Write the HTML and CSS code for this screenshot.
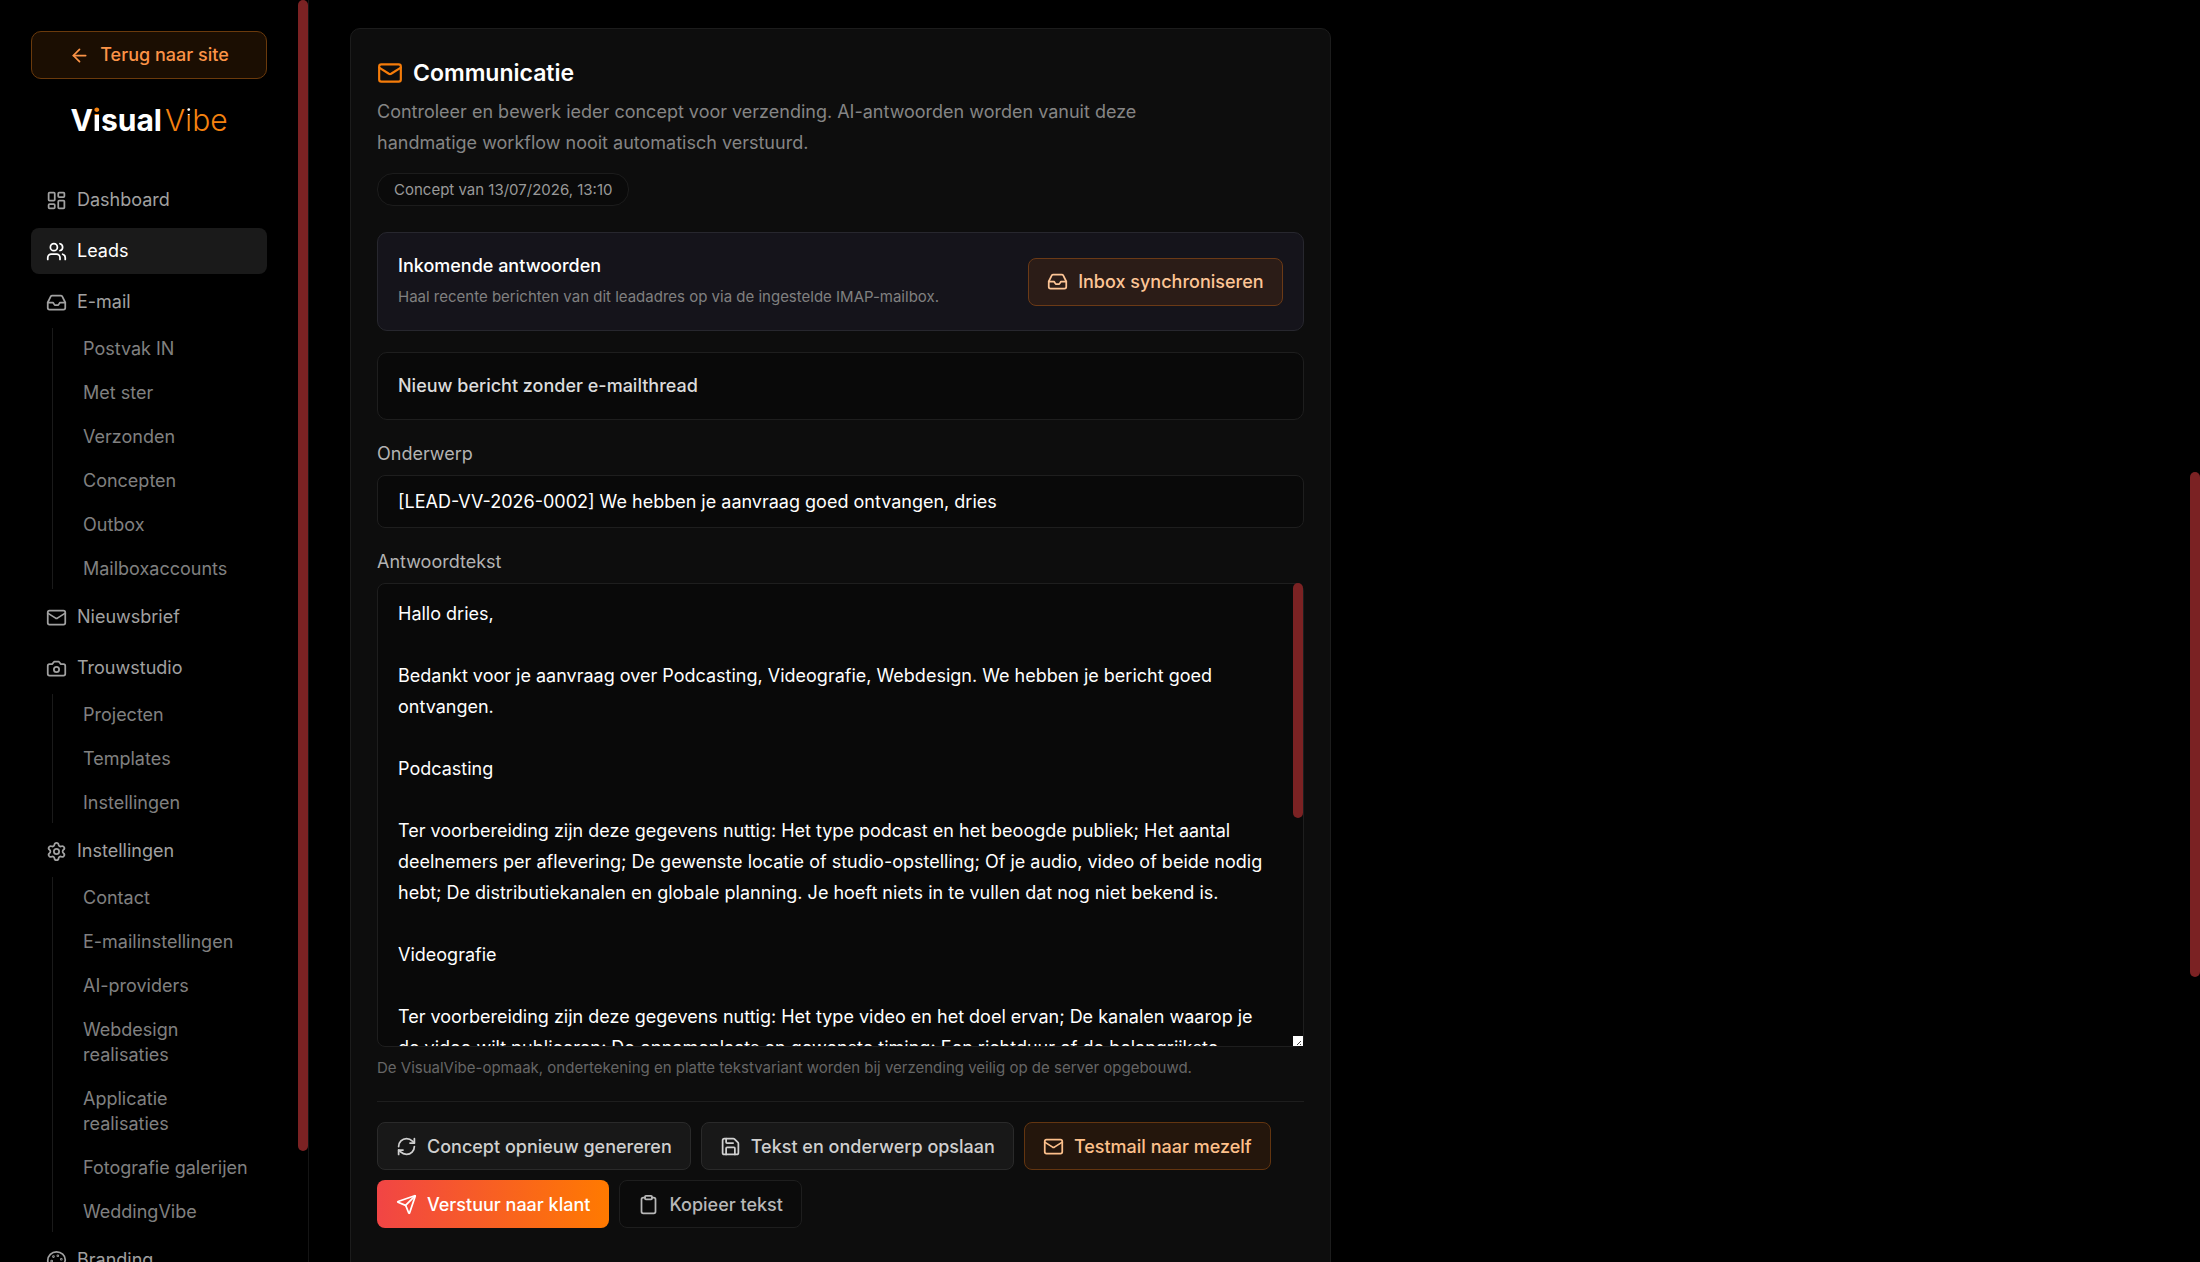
FILE: index.html
```html
<!DOCTYPE html>
<html lang="nl">
<head>
    <meta charset="UTF-8">
    <meta name="viewport" content="width=device-width, initial-scale=1">
    <title>VisualVibe - Leads</title>
    <link rel="stylesheet" href="styles.css">
</head>
<body>
<svg class="sprite" xmlns="http://www.w3.org/2000/svg">
    <symbol id="arrow-left" viewBox="0 0 24 24"><path d="m12 19-7-7 7-7"/><path d="M19 12H5"/></symbol>
    <symbol id="dashboard" viewBox="0 0 24 24"><rect width="7" height="9" x="3" y="3" rx="1"/><rect width="7" height="5" x="14" y="3" rx="1"/><rect width="7" height="9" x="14" y="12" rx="1"/><rect width="7" height="5" x="3" y="16" rx="1"/></symbol>
    <symbol id="users" viewBox="0 0 24 24"><path d="M16 21v-2a4 4 0 0 0-4-4H6a4 4 0 0 0-4 4v2"/><path d="M16 3.128a4 4 0 0 1 0 7.744"/><path d="M22 21v-2a4 4 0 0 0-3-3.87"/><circle cx="9" cy="7" r="4"/></symbol>
    <symbol id="inbox" viewBox="0 0 24 24"><path d="M22 12h-6l-2 3h-4l-2-3H2"/><path d="M5.45 5.11 2 12v6a2 2 0 0 0 2 2h16a2 2 0 0 0 2-2v-6l-3.45-6.89A2 2 0 0 0 16.76 4H7.24a2 2 0 0 0-1.79 1.11z"/></symbol>
    <symbol id="mail" viewBox="0 0 24 24"><rect width="20" height="16" x="2" y="4" rx="2"/><path d="m22 7-8.991 5.727a2 2 0 0 1-2.009 0L2 7"/></symbol>
    <symbol id="camera" viewBox="0 0 24 24"><path d="M14.5 4h-5L7 7H4a2 2 0 0 0-2 2v9a2 2 0 0 0 2 2h16a2 2 0 0 0 2-2V9a2 2 0 0 0-2-2h-3l-2.5-3z"/><circle cx="12" cy="13" r="3"/></symbol>
    <symbol id="settings" viewBox="0 0 24 24"><path d="M9.671 4.136a2.34 2.34 0 0 1 4.659 0 2.34 2.34 0 0 0 3.319 1.915 2.34 2.34 0 0 1 2.33 4.033 2.34 2.34 0 0 0 0 3.831 2.34 2.34 0 0 1-2.33 4.033 2.34 2.34 0 0 0-3.319 1.915 2.34 2.34 0 0 1-4.659 0 2.34 2.34 0 0 0-3.32-1.915 2.34 2.34 0 0 1-2.33-4.033 2.34 2.34 0 0 0 0-3.831A2.34 2.34 0 0 1 6.35 6.051a2.34 2.34 0 0 0 3.319-1.915"/><circle cx="12" cy="12" r="3"/></symbol>
    <symbol id="palette" viewBox="0 0 24 24"><path d="M12 22a1 1 0 0 1 0-20 10 9 0 0 1 10 9 5 5 0 0 1-5 5h-2.25a1.75 1.75 0 0 0-1.4 2.8l.3.4a1.75 1.75 0 0 1-1.4 2.8z"/><circle cx="13.5" cy="6.5" r=".5"/><circle cx="17.5" cy="10.5" r=".5"/><circle cx="6.5" cy="12.5" r=".5"/><circle cx="8.5" cy="7.5" r=".5"/></symbol>
    <symbol id="refresh" viewBox="0 0 24 24"><path d="M3 12a9 9 0 0 1 9-9 9.75 9.75 0 0 1 6.74 2.74L21 8"/><path d="M21 3v5h-5"/><path d="M21 12a9 9 0 0 1-9 9 9.75 9.75 0 0 1-6.74-2.74L3 16"/><path d="M8 16H3v5"/></symbol>
    <symbol id="save" viewBox="0 0 24 24"><path d="M15.2 3a2 2 0 0 1 1.4.6l3.8 3.8a2 2 0 0 1 .6 1.4V19a2 2 0 0 1-2 2H5a2 2 0 0 1-2-2V5a2 2 0 0 1 2-2z"/><path d="M17 21v-7a1 1 0 0 0-1-1H8a1 1 0 0 0-1 1v7"/><path d="M7 3v4a1 1 0 0 0 1 1h7"/></symbol>
    <symbol id="send" viewBox="0 0 24 24"><path d="M14.536 21.686a.5.5 0 0 0 .937-.024l6.5-19a.496.496 0 0 0-.635-.635l-19 6.5a.5.5 0 0 0-.024.937l7.93 3.18a2 2 0 0 1 1.112 1.11z"/><path d="m21.854 2.147-10.94 10.939"/></symbol>
    <symbol id="clipboard" viewBox="0 0 24 24"><rect width="8" height="4" x="8" y="2" rx="1"/><path d="M16 4h2a2 2 0 0 1 2 2v14a2 2 0 0 1-2 2H6a2 2 0 0 1-2-2V6a2 2 0 0 1 2-2h2"/></symbol>
</svg>

<div class="layout">
    <aside class="sidebar">
        <a class="back" href="#"><svg class="icon"><use href="#arrow-left"/></svg>Terug naar site</a>
        <a class="logo" href="#" aria-label="VisualVibe"><span class="logo-visual">V<span class="dot-orange">i</span>sual</span><span class="logo-vibe">V<span class="dot-white">i</span>be</span></a>

        <nav class="nav">
            <a class="nav-item" href="#"><svg class="icon"><use href="#dashboard"/></svg>Dashboard</a>
            <a class="nav-item active" href="#"><svg class="icon"><use href="#users"/></svg>Leads</a>
            <div class="nav-group">
                <a class="nav-item" href="#"><svg class="icon"><use href="#inbox"/></svg>E-mail</a>
                <div class="subnav">
                    <a href="#">Postvak IN</a>
                    <a href="#">Met ster</a>
                    <a href="#">Verzonden</a>
                    <a href="#">Concepten</a>
                    <a href="#">Outbox</a>
                    <a href="#">Mailboxaccounts</a>
                </div>
            </div>
            <a class="nav-item" href="#"><svg class="icon"><use href="#mail"/></svg>Nieuwsbrief</a>
            <div class="nav-group">
                <a class="nav-item" href="#"><svg class="icon"><use href="#camera"/></svg>Trouwstudio</a>
                <div class="subnav">
                    <a href="#">Projecten</a>
                    <a href="#">Templates</a>
                    <a href="#">Instellingen</a>
                </div>
            </div>
            <div class="nav-group">
                <a class="nav-item" href="#"><svg class="icon"><use href="#settings"/></svg>Instellingen</a>
                <div class="subnav">
                    <a href="#">Contact</a>
                    <a href="#">E-mailinstellingen</a>
                    <a href="#">AI-providers</a>
                    <a href="#">Webdesign realisaties</a>
                    <a href="#">Applicatie realisaties</a>
                    <a href="#">Fotografie galerijen</a>
                    <a href="#">WeddingVibe</a>
                </div>
            </div>
            <a class="nav-item" href="#"><svg class="icon"><use href="#palette"/></svg>Branding</a>
        </nav>
        <span class="thumb thumb-sidebar"></span>
    </aside>

    <main class="main">
        <section class="card">
            <h2 class="card-title"><svg class="icon icon-lg"><use href="#mail"/></svg>Communicatie</h2>
            <p class="intro">Controleer en bewerk ieder concept voor verzending. AI-antwoorden worden vanuit deze handmatige workflow nooit automatisch verstuurd.</p>
            <span class="pill">Concept van 13/07/2026, 13:10</span>

            <div class="panel panel-inbox">
                <div>
                    <h3 class="panel-title">Inkomende antwoorden</h3>
                    <p class="panel-text">Haal recente berichten van dit leadadres op via de ingestelde IMAP-mailbox.</p>
                </div>
                <button type="button" class="btn btn-sync"><svg class="icon"><use href="#inbox"/></svg>Inbox synchroniseren</button>
            </div>

            <div class="panel panel-thread">Nieuw bericht zonder e-mailthread</div>

            <form class="form">
                <div class="field">
                    <label for="subject">Onderwerp</label>
                    <input type="text" id="subject" value="[LEAD-VV-2026-0002] We hebben je aanvraag goed ontvangen, dries">
                </div>
                <div class="field">
                    <label for="body">Antwoordtekst</label>
                    <div class="textarea-wrap">
                        <textarea id="body">Hallo dries,

Bedankt voor je aanvraag over Podcasting, Videografie, Webdesign. We hebben je bericht goed ontvangen.

Podcasting

Ter voorbereiding zijn deze gegevens nuttig: Het type podcast en het beoogde publiek; Het aantal deelnemers per aflevering; De gewenste locatie of studio-opstelling; Of je audio, video of beide nodig hebt; De distributiekanalen en globale planning. Je hoeft niets in te vullen dat nog niet bekend is.

Videografie

Ter voorbereiding zijn deze gegevens nuttig: Het type video en het doel ervan; De kanalen waarop je de video wilt publiceren; De opnameplaats en gewenste timing; Een richtduur of de belangrijkste</textarea>
                        <span class="thumb thumb-text"></span>
                        <svg class="resizer" viewBox="0 0 10 10"><path d="M4 9l4-4M7 9l1-1"/></svg>
                    </div>
                    <p class="hint">De VisualVibe-opmaak, ondertekening en platte tekstvariant worden bij verzending veilig op de server opgebouwd.</p>
                </div>

                <div class="actions">
                    <button type="button" class="btn btn-dark"><svg class="icon"><use href="#refresh"/></svg>Concept opnieuw genereren</button>
                    <button type="button" class="btn btn-dark"><svg class="icon"><use href="#save"/></svg>Tekst en onderwerp opslaan</button>
                    <button type="button" class="btn btn-test"><svg class="icon"><use href="#mail"/></svg>Testmail naar mezelf</button>
                    <button type="submit" class="btn btn-send"><svg class="icon"><use href="#send"/></svg>Verstuur naar klant</button>
                    <button type="button" class="btn btn-ghost"><svg class="icon"><use href="#clipboard"/></svg>Kopieer tekst</button>
                </div>
            </form>
        </section>
    </main>
</div>
<span class="thumb thumb-page"></span>
</body>
</html>
```

FILE: styles.css
```css
* {
    box-sizing: border-box;
}

body {
    margin: 0;
    height: 100vh;
    overflow: hidden;
    background: #000;
    color: #fff;
    font-family: Inter, "Liberation Sans", sans-serif;
    font-size: 18px;
    line-height: 26px;
}

a {
    color: inherit;
    text-decoration: none;
}

h2, h3, p {
    margin: 0;
}

.sprite {
    position: absolute;
    width: 0;
    height: 0;
}

.icon {
    flex: none;
    width: 21px;
    height: 21px;
    fill: none;
    stroke: currentColor;
    stroke-width: 2;
    stroke-linecap: round;
    stroke-linejoin: round;
}

.icon-lg {
    width: 26px;
    height: 26px;
    color: #f57c0a;
}

.layout {
    display: flex;
    height: 100%;
    padding-right: 10px;
}

/* scrollbars */

.thumb {
    position: absolute;
    width: 10px;
    border-radius: 5px;
    background: #7b2223;
}

.thumb-sidebar {
    top: 0;
    right: 0;
    height: 1151px;
}

.thumb-text {
    top: 0;
    right: 1px;
    height: 235px;
}

.thumb-page {
    top: 472px;
    right: 0;
    height: 505px;
}

/* sidebar */

.sidebar {
    position: relative;
    flex: none;
    width: 309px;
    padding: 31px 41px 0 31px;
    overflow: hidden;
    border-right: 1px solid #141414;
}

.back {
    display: flex;
    align-items: center;
    justify-content: center;
    gap: 10px;
    height: 48px;
    border: 1px solid #6b3a0c;
    border-radius: 10px;
    background: #1b0e02;
    color: #fb9347;
    font-weight: 500;
}

.logo {
    display: flex;
    justify-content: center;
    gap: 3px;
    margin-top: 21px;
    font-size: 30px;
    line-height: 40px;
}

.logo-visual {
    font-weight: 700;
}

.logo-vibe {
    color: #f5820f;
    font-weight: 300;
}

.dot-orange,
.dot-white {
    background-clip: text;
    -webkit-background-clip: text;
    color: transparent;
}

.dot-orange {
    background-image: linear-gradient(#f5820f 35%, #fff 35%);
}

.dot-white {
    background-image: linear-gradient(#fff 35%, #f5820f 35%);
}

.nav {
    display: flex;
    flex-direction: column;
    gap: 5px;
    margin-top: 37px;
}

.nav-item {
    display: flex;
    align-items: center;
    gap: 10px;
    height: 46px;
    padding: 0 15px;
    border-radius: 8px;
    color: #a1a1a1;
}

.nav-item.active {
    background: #1a1a1a;
    color: #fff;
}

.subnav {
    display: flex;
    flex-direction: column;
    gap: 3px;
    margin: 3px 0 0 21px;
    padding-left: 15px;
    border-left: 1px solid #1a1a1a;
    color: #808080;
    line-height: 25px;
}

.subnav a {
    padding: 8px 15px;
}

/* content */

.main {
    flex: 1;
    display: grid;
    grid-template-columns: 5fr 4fr;
    gap: 34px;
    align-items: start;
    padding: 28px 41px;
}

.card {
    padding: 26px 26px 64px;
    border: 1px solid #1c1c1c;
    border-radius: 10px;
    background: #0d0d0d;
}

.card-title {
    display: flex;
    align-items: center;
    gap: 10px;
    font-size: 23px;
    font-weight: 600;
    line-height: 36px;
}

.intro {
    max-width: 832px;
    margin-top: 5px;
    color: #858585;
    line-height: 31px;
}

.pill {
    display: block;
    width: fit-content;
    margin-top: 15px;
    padding: 5px 16px;
    border: 1px solid #1c1c1c;
    border-radius: 16px;
    background: #0a0a0a;
    color: #999;
    font-size: 15px;
    line-height: 21px;
}

.panel {
    padding: 20px;
    border: 1px solid #1e1e1e;
    border-radius: 10px;
    background: #090909;
    font-weight: 500;
}

.panel-inbox {
    display: flex;
    align-items: center;
    justify-content: space-between;
    margin-top: 26px;
    border-color: #27272e;
    background: #15141b;
}

.panel-title {
    font-size: 18px;
    font-weight: 500;
}

.panel-text {
    margin-top: 5px;
    color: #808080;
    font-size: 15px;
    font-weight: 400;
}

.panel-thread {
    margin-top: 21px;
    color: #dcdcdc;
}

.field {
    display: flex;
    flex-direction: column;
    gap: 8px;
    margin-top: 21px;
}

.field label {
    color: #b3b3b3;
}

.field input,
.field textarea {
    display: block;
    width: 100%;
    border: 1px solid #1e1e1e;
    border-radius: 8px;
    outline: none;
    background: #090909;
    color: #fff;
    font: inherit;
}

.field input {
    height: 53px;
    padding: 0 20px;
}

.field textarea {
    height: 464px;
    padding: 14px 30px 14px 20px;
    overflow: hidden;
    resize: none;
    line-height: 31px;
}

.textarea-wrap {
    position: relative;
}

.resizer {
    position: absolute;
    right: 1px;
    bottom: 1px;
    width: 10px;
    height: 10px;
    background: #fff;
    fill: none;
    stroke: #444;
}

.hint {
    color: #666;
    font-size: 15px;
}

.actions {
    display: flex;
    flex-wrap: wrap;
    gap: 10px;
    margin-top: 20px;
    padding-top: 20px;
    border-top: 1px solid #1e1e1e;
}

.btn {
    display: flex;
    align-items: center;
    gap: 10px;
    height: 48px;
    padding: 0 18px;
    border: 1px solid #2a2a2a;
    border-radius: 8px;
    background: #181818;
    color: #d0d0d0;
    font-family: inherit;
    font-size: 18px;
    font-weight: 500;
    cursor: pointer;
}

.btn-sync {
    border-color: #6b3a16;
    background: #2b1c17;
    color: #fdc596;
}

.btn-test {
    border-color: #633510;
    background: #24160c;
    color: #fdc08b;
}

.btn-send {
    border: 0;
    padding: 0 19px;
    background: linear-gradient(to right, #f14545, #ff7a00);
    color: #fff;
}

.btn-ghost {
    border-color: #1e1e1e;
    background: #0b0b0b;
    color: #b8b8b8;
}
```
